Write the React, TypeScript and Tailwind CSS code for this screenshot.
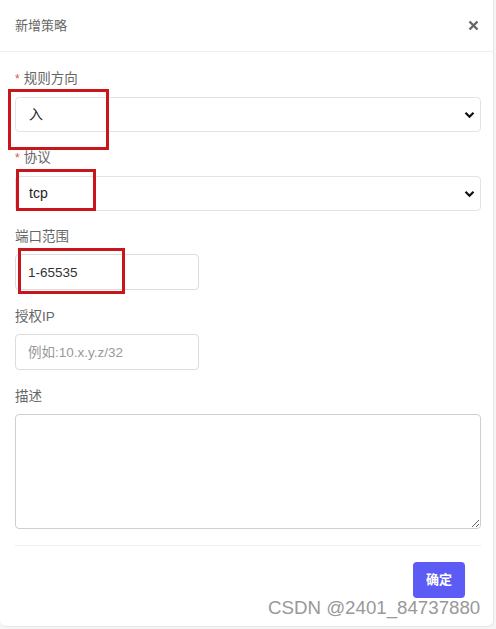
import { useState } from 'react'

const CJK = "font-['Liberation_Sans','Noto_Sans_CJK_SC',sans-serif]"

function Label({ text, required }: { text: string; required?: boolean }) {
  return (
    <div className="flex h-5 items-center text-[13.5px] text-[#666]">
      {required && <span className="mr-1 text-[12px] text-[#d9534f]">*</span>}
      {text}
    </div>
  )
}

function Chevron() {
  return (
    <svg width="11" height="8" viewBox="0 0 11 8" className="pointer-events-none absolute right-[6px] top-1/2 -translate-y-1/2">
      <path d="M1.5 1.8 L5.5 5.8 L9.5 1.8" fill="none" stroke="#111" strokeWidth="2.2" />
    </svg>
  )
}

function SelectField({ value, options }: { value: string; options: string[] }) {
  const [v, setV] = useState(value)
  return (
    <div className="relative mt-[8px] h-[35px] w-full">
      <select
        value={v}
        onChange={(e) => setV(e.target.value)}
        className="h-full w-full appearance-none rounded-[4px] border border-[#e3e3e3] bg-white pl-[13px] text-[14px] text-[#222] outline-none"
      >
        {options.map((o) => (
          <option key={o}>{o}</option>
        ))}
      </select>
      <Chevron />
    </div>
  )
}

export default function App() {
  return (
    <div className={`relative h-[629px] w-[496px] bg-[#f5f5f5] ${CJK}`}>
      <div className="flex h-[627px] w-[494px] flex-col rounded-b-[6px] border-r border-b border-[#e6e6e6] bg-white">
        {/* Header */}
        <div className="flex h-[52px] shrink-0 items-center justify-between border-b border-[#eeeeee] pl-[15px] pr-[14px]">
          <span className="text-[13px] text-[#666]">新增策略</span>
          <svg width="11" height="11" viewBox="0 0 11 11">
            <path d="M1.5 1.5 L9.5 9.5 M9.5 1.5 L1.5 9.5" stroke="#666" strokeWidth="2.4" />
          </svg>
        </div>

        {/* Body */}
        <div className="flex flex-col pl-[15px] pr-[12px] pt-[17px]">
          <Label text="规则方向" required />
          <SelectField value="入" options={['入', '出']} />

          <div className="mt-[16px]">
            <Label text="协议" required />
          </div>
          <SelectField value="tcp" options={['tcp', 'udp', 'icmp']} />

          <div className="mt-[16px]">
            <Label text="端口范围" />
          </div>
          <input
            defaultValue="1-65535"
            className="mt-[7px] h-[36px] w-[184px] rounded-[4px] border border-[#dcdcdc] pl-[12px] text-[13.5px] text-[#333] outline-none"
          />

          <div className="mt-[17px]">
            <Label text="授权IP" />
          </div>
          <input
            placeholder="例如:10.x.y.z/32"
            className="mt-[7px] h-[36px] w-[184px] rounded-[4px] border border-[#dcdcdc] pl-[12px] text-[13.5px] text-[#333] outline-none placeholder:text-[#999]"
          />

          <div className="mt-[17px]">
            <Label text="描述" />
          </div>
          <textarea className="mt-[7px] h-[115px] w-full rounded-[4px] border border-[#cfcfcf] outline-none" />

          <div className="mt-[16px] h-px w-full bg-[#eeeeee]" />

          <div className="flex justify-end pr-[16px] pt-[16px]">
            <button className="h-[36px] w-[52px] rounded-[4px] bg-[#5c5cf5] text-[13px] font-bold text-white">
              确定
            </button>
          </div>
        </div>
      </div>

      {/* Red annotation boxes */}
      <div className="absolute left-[8px] top-[89px] h-[61px] w-[101px] border-[3px] border-[#c8161d]" />
      <div className="absolute left-[16px] top-[169px] h-[42px] w-[80px] border-[3px] border-[#c8161d]" />
      <div className="absolute left-[18px] top-[248px] h-[46px] w-[107px] border-[3px] border-[#c8161d]" />

      {/* Watermark */}
      <div className="absolute left-[268px] top-[595px] text-[18.7px] leading-[26px] text-[#999]">
        CSDN @2401_84737880
      </div>
    </div>
  )
}
